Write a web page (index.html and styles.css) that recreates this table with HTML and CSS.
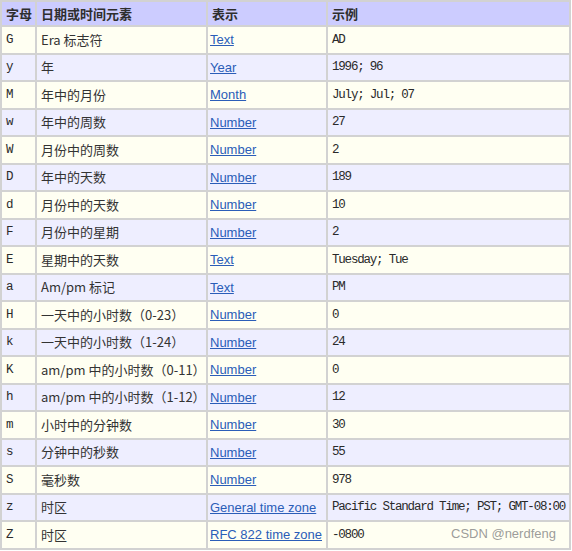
FILE: index.html
```html
<!DOCTYPE html>
<html lang="zh">
<head>
<meta charset="utf-8">
<link rel="stylesheet" href="styles.css">
</head>
<body>
<div class="wrap">
<table class="fmt">
<colgroup><col class="c1"><col class="c2"><col class="c3"><col class="c4"></colgroup>
<thead>
<tr><th>字母</th><th>日期或时间元素</th><th>表示</th><th>示例</th></tr>
</thead>
<tbody>
<tr class="odd"><td class="m">G</td><td>Era 标志符</td><td class="l"><a href="#">Text</a></td><td class="m">AD</td></tr>
<tr class="even"><td class="m">y</td><td>年</td><td class="l"><a href="#">Year</a></td><td class="m">1996; 96</td></tr>
<tr class="odd"><td class="m">M</td><td>年中的月份</td><td class="l"><a href="#">Month</a></td><td class="m">July; Jul; 07</td></tr>
<tr class="even"><td class="m">w</td><td>年中的周数</td><td class="l"><a href="#">Number</a></td><td class="m">27</td></tr>
<tr class="odd"><td class="m">W</td><td>月份中的周数</td><td class="l"><a href="#">Number</a></td><td class="m">2</td></tr>
<tr class="even"><td class="m">D</td><td>年中的天数</td><td class="l"><a href="#">Number</a></td><td class="m">189</td></tr>
<tr class="odd"><td class="m">d</td><td>月份中的天数</td><td class="l"><a href="#">Number</a></td><td class="m">10</td></tr>
<tr class="even"><td class="m">F</td><td>月份中的星期</td><td class="l"><a href="#">Number</a></td><td class="m">2</td></tr>
<tr class="odd"><td class="m">E</td><td>星期中的天数</td><td class="l"><a href="#">Text</a></td><td class="m">Tuesday; Tue</td></tr>
<tr class="even"><td class="m">a</td><td>Am/pm 标记</td><td class="l"><a href="#">Text</a></td><td class="m">PM</td></tr>
<tr class="odd"><td class="m">H</td><td>一天中的小时数（0-23）</td><td class="l"><a href="#">Number</a></td><td class="m">0</td></tr>
<tr class="even"><td class="m">k</td><td>一天中的小时数（1-24）</td><td class="l"><a href="#">Number</a></td><td class="m">24</td></tr>
<tr class="odd"><td class="m">K</td><td>am/pm 中的小时数（0-11）</td><td class="l"><a href="#">Number</a></td><td class="m">0</td></tr>
<tr class="even"><td class="m">h</td><td>am/pm 中的小时数（1-12）</td><td class="l"><a href="#">Number</a></td><td class="m">12</td></tr>
<tr class="odd"><td class="m">m</td><td>小时中的分钟数</td><td class="l"><a href="#">Number</a></td><td class="m">30</td></tr>
<tr class="even"><td class="m">s</td><td>分钟中的秒数</td><td class="l"><a href="#">Number</a></td><td class="m">55</td></tr>
<tr class="odd"><td class="m">S</td><td>毫秒数</td><td class="l"><a href="#">Number</a></td><td class="m">978</td></tr>
<tr class="even"><td class="m">z</td><td>时区</td><td class="l"><a href="#">General time zone</a></td><td class="m">Pacific Standard Time; PST; GMT-08:00</td></tr>
<tr class="odd"><td class="m">Z</td><td>时区</td><td class="l"><a href="#">RFC 822 time zone</a></td><td class="m">-0800</td></tr>
</tbody>
</table>
<div class="wm">CSDN @nerdfeng</div>
</div>
</body>
</html>
```
FILE: styles.css
```css
html, body {
  margin: 0;
  padding: 0;
  background: #ffffff;
}
.wrap {
  position: relative;
  width: 572px;
  height: 551px;
}
.fmt {
  border-collapse: collapse;
  table-layout: fixed;
  width: 569px;
  font-family: "Noto Sans CJK SC", "Liberation Sans", sans-serif;
  font-size: 13px;
  color: #333333;
}
.c1 { width: 35px; }
.c2 { width: 171px; }
.c3 { width: 120px; }
.c4 { width: 243px; }
.fmt th, .fmt td {
  border: 2px solid #d2d2d2;
  padding: 0 4px;
  text-align: left;
  white-space: nowrap;
  overflow: hidden;
  line-height: 16px;
}
.fmt th {
  background: #ccccff;
  font-weight: bold;
  height: 23px;
  color: #2e2e2e;
}
.fmt tbody tr { height: 27.5px; }
.odd td { background: #fffff2; }
.even td { background: #eeeeff; }
.fmt td.l { padding-left: 2px; }
.fmt td.m {
  font-family: "Liberation Mono", monospace;
  font-size: 12.5px;
  letter-spacing: -1.2px;
  color: #2a2a2a;
}
.fmt a {
  font-family: "Liberation Sans", Arial, sans-serif;
  font-size: 13px;
  color: #2a5db8;
  text-decoration: underline;
}
.wm {
  position: absolute;
  left: 451px;
  top: 526px;
  font-family: "Liberation Sans", Arial, sans-serif;
  font-size: 13px;
  color: rgba(130, 130, 130, 0.8);
}
```
